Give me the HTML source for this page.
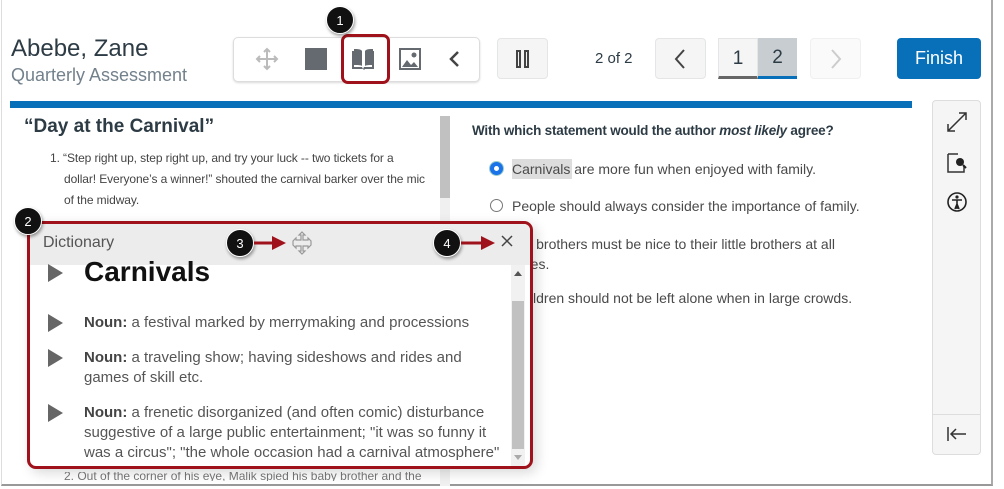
<!DOCTYPE html>
<html><head><meta charset="utf-8"><style>
*{margin:0;padding:0;box-sizing:border-box}
body{width:1004px;height:489px;background:#fff;font-family:"Liberation Sans",sans-serif;position:relative;overflow:hidden;color:#2d3b45}
.a{position:absolute}
.btn{position:absolute;border:1px solid #e3e5e7;border-radius:4px;background:#f5f5f5}
.badge{position:absolute;width:28px;height:28px;border-radius:50%;background:#111;color:#fff;font-size:13px;text-align:center;line-height:28px;box-shadow:1px 2px 3px rgba(0,0,0,.4);border:1px solid #fff}
.opt{position:absolute;left:512px;font-size:14px;color:#4a4a4a}
.radio{position:absolute;left:490px;width:13px;height:13px;border-radius:50%;border:1px solid #777;background:#fff}
.tri{position:absolute;left:48px;width:0;height:0;border-left:15px solid #666;border-top:9px solid transparent;border-bottom:9px solid transparent}
.def{position:absolute;left:84px;font-size:15px;line-height:20px;color:#555;width:420px}
.def b{color:#444}
</style></head><body>
<div class="a" style="left:1px;top:0;width:992px;height:486px;border-right:2px solid #aaa;border-bottom:2px solid #999;border-left:1px solid #ddd"></div>

<div class="a" style="left:11px;top:35px;font-size:24px;color:#2d3b45">Abebe, Zane</div>
<div class="a" style="left:11px;top:65px;font-size:18px;color:#73818c">Quarterly Assessment</div>

<div class="a" style="left:233px;top:37px;width:247px;height:45px;border:1px solid #ddd;border-radius:5px;background:#fff;box-shadow:0 1px 2px rgba(0,0,0,.15)"></div>
<svg class="a" style="left:255px;top:47px" width="24" height="24" viewBox="0 0 24 24" fill="none" stroke="#bbb" stroke-width="2"><path d="M12 2v20M2 12h20M9 5l3-3 3 3M9 19l3 3 3-3M5 9l-3 3 3 3M19 9l3 3-3 3"/></svg>
<div class="a" style="left:305px;top:48px;width:22px;height:22px;background:#656970"></div>
<svg class="a" style="left:351px;top:48px" width="25" height="22" viewBox="0 0 25 22"><path d="M1 3h2v16h8l1 2 1-2h8V3h2v18h-9l-1 1-1-1H1z" fill="#656970"/><path d="M3 1c3 0 7 0 8 2v15c-1-1-5-1-8-1zM22 1c-3 0-7 0-8 2v15c1-1 5-1 8-1z" fill="#656970"/></svg>
<svg class="a" style="left:399px;top:48px" width="22" height="22" viewBox="0 0 22 22"><rect x="1" y="1" width="20" height="20" fill="none" stroke="#656970" stroke-width="2"/><circle cx="15" cy="7" r="2.5" fill="#656970"/><path d="M3 19l5-7 4 5 3-3 4 5z" fill="#656970"/></svg>
<svg class="a" style="left:447px;top:50px" width="14" height="18" viewBox="0 0 14 18"><path d="M11 2L4 9l7 7" fill="none" stroke="#444" stroke-width="2.5"/></svg>
<div class="a" style="left:341px;top:34px;width:49px;height:50px;border:3px solid #a0121b;border-radius:7px"></div>
<div class="badge" style="left:326px;top:6px">1</div>

<div class="btn" style="left:497px;top:38px;width:51px;height:41px"></div>
<div class="a" style="left:516px;top:50px;width:5px;height:18px;border:2px solid #444"></div>
<div class="a" style="left:524px;top:50px;width:5px;height:18px;border:2px solid #444"></div>
<div class="a" style="left:595px;top:50px;font-size:15px;color:#2d3b45">2 of 2</div>
<div class="btn" style="left:655px;top:38px;width:51px;height:41px"></div>
<svg class="a" style="left:673px;top:48px" width="14" height="22" viewBox="0 0 14 22"><path d="M11 2L3 11l8 9" fill="none" stroke="#444" stroke-width="2"/></svg>
<div class="a" style="left:718px;top:38px;width:40px;height:41px;background:#f5f5f5;border:1px solid #e3e5e7;border-bottom:3px solid #666;text-align:center;font-size:19px;line-height:40px">1</div>
<div class="a" style="left:758px;top:38px;width:39px;height:41px;background:#c7cdd1;border-bottom:3px solid #0770b8;text-align:center;font-size:19px;line-height:40px">2</div>
<div class="btn" style="left:810px;top:38px;width:51px;height:41px;background:#fafafa;border-color:#f0f0f0"></div>
<svg class="a" style="left:829px;top:48px" width="14" height="22" viewBox="0 0 14 22"><path d="M3 2l8 9-8 9" fill="none" stroke="#ccc" stroke-width="2"/></svg>
<div class="a" style="left:897px;top:38px;width:84px;height:41px;background:#0770b8;border-radius:4px;color:#fff;font-size:18px;text-align:center;line-height:41px">Finish</div>

<div class="a" style="left:10px;top:101px;width:902px;height:7px;background:#0770b8"></div>

<div class="a" style="left:24px;top:116px;font-size:19px;font-weight:bold;color:#2d3b45">“Day at the Carnival”</div>
<div class="a" style="left:50px;top:148px;font-size:12px;line-height:21px;color:#444;white-space:nowrap;letter-spacing:-0.1px">1.&nbsp;“Step right up, step right up, and try your luck -- two tickets for a<br><span style="padding-left:14px">dollar! Everyone’s a winner!” shouted the carnival barker over the mic</span><br><span style="padding-left:14px">of the midway.</span></div>
<div class="a" style="left:440px;top:116px;width:10px;height:370px;background:#f0f0f0"></div>
<div class="a" style="left:440px;top:116px;width:10px;height:82px;background:#c1c1c1"></div>
<div class="a" style="left:64px;top:472px;width:380px;height:9px;overflow:hidden;font-size:12px;line-height:9px;color:#777;white-space:nowrap">2. Out of the corner of his eye, Malik spied his baby brother and the</div>

<div class="a" style="left:472px;top:123px;font-size:13.5px;font-weight:bold;color:#2d3b45;letter-spacing:-0.2px">With which statement would the author <i>most likely</i> agree?</div>
<div class="radio" style="top:162px;border:4px solid #1a73e8;box-shadow:0 0 0 1px #9cc"></div>
<div class="a" style="left:512px;top:159px;width:60px;height:20px;background:#ddd"></div>
<div class="opt" style="top:161px">Carnivals are more fun when enjoyed with family.</div>
<div class="radio" style="top:199px"></div>
<div class="opt" style="top:198px">People should always consider the importance of family.</div>
<div class="radio" style="top:235px"></div>
<div class="opt" style="top:234px;line-height:20px">Big brothers must be nice to their little brothers at all<br>times.</div>
<div class="radio" style="top:291px"></div>
<div class="opt" style="top:290px">Children should not be left alone when in large crowds.</div>

<div class="a" style="left:932px;top:100px;width:49px;height:355px;background:#f5f5f5;border:1px solid #ddd;border-radius:4px"></div>
<div class="a" style="left:932px;top:414px;width:49px;height:1px;background:#ddd"></div>
<svg class="a" style="left:946px;top:111px" width="22" height="22" viewBox="0 0 22 22" fill="none" stroke="#333" stroke-width="1.5"><path d="M2 20L20 2M13 2h7v7M2 13v7h7"/></svg>
<svg class="a" style="left:946px;top:152px" width="22" height="22" viewBox="0 0 22 22"><path d="M2 2h10M2 2v18h16v-6" fill="none" stroke="#333" stroke-width="1.5"/><circle cx="14" cy="10" r="4" fill="#222"/><path d="M17 13l3 3" stroke="#222" stroke-width="2"/></svg>
<svg class="a" style="left:946px;top:191px" width="22" height="22" viewBox="0 0 22 22"><circle cx="11" cy="11" r="9" fill="none" stroke="#222" stroke-width="1.6"/><circle cx="11" cy="6" r="1.6" fill="#222"/><path d="M6 9h10M11 9v9M9 18l2-5 2 5" stroke="#222" stroke-width="1.6" fill="none"/></svg>
<svg class="a" style="left:946px;top:425px" width="22" height="18" viewBox="0 0 22 18" fill="none" stroke="#333" stroke-width="1.5"><path d="M2 2v14M5 9h15M10 4L5 9l5 5"/></svg>

<div class="a" style="left:27px;top:221px;width:506px;height:248px;border:3px solid #a0121b;border-radius:9px;background:#fff;overflow:hidden;box-shadow:4px 4px 12px rgba(0,0,0,.15)">
 <div class="a" style="left:0;top:0;width:500px;height:41px;background:#ececec"></div>
 <div class="a" style="left:13px;top:10px;font-size:16px;color:#555">Dictionary</div>
 <div class="a" style="left:481px;top:41px;width:14px;height:204px;background:#f1f1f1"></div>
 <div class="a" style="left:482px;top:77px;width:12px;height:148px;background:#c1c1c1"></div>
 <div class="a" style="left:484px;top:47px;border-left:4px solid transparent;border-right:4px solid transparent;border-bottom:5px solid #555"></div>
 <div class="a" style="left:484px;top:231px;border-left:4px solid transparent;border-right:4px solid transparent;border-top:5px solid #aaa"></div>
</div>
<svg class="a" style="left:290px;top:231px" width="24" height="24" viewBox="0 0 24 24" fill="none" stroke="#999" stroke-width="1.2"><path d="M12 1l3 3h-2v5h5V7l3 3v0l0 4-3 3v-2h-5v5h2l-3 3-3-3h2v-5H6v2l-3-3v-4l3-3v2h5V4H9z"/></svg>
<div class="tri" style="top:264px"></div>
<div class="a" style="left:84px;top:256px;font-size:28px;font-weight:bold;color:#111">Carnivals</div>
<div class="tri" style="top:314px"></div>
<div class="def" style="top:313px"><b>Noun:</b> a festival marked by merrymaking and processions</div>
<div class="tri" style="top:349px"></div>
<div class="def" style="top:348px"><b>Noun:</b> a traveling show; having sideshows and rides and games of skill etc.</div>
<div class="tri" style="top:404px"></div>
<div class="def" style="top:403px"><b>Noun:</b> a frenetic disorganized (and often comic) disturbance suggestive of a large public entertainment; "it was so funny it was a circus"; "the whole occasion had a carnival atmosphere"</div>

<div class="badge" style="left:14px;top:207px">2</div>
<div class="badge" style="left:226px;top:229px">3</div>
<svg class="a" style="left:254px;top:236px" width="34" height="14"><path d="M0 7h20" stroke="#a0121b" stroke-width="3"/><path d="M18 0l14 7-14 7z" fill="#a0121b"/></svg>
<div class="badge" style="left:433px;top:229px">4</div>
<svg class="a" style="left:461px;top:236px" width="36" height="14"><path d="M0 7h22" stroke="#a0121b" stroke-width="3"/><path d="M20 0l14 7-14 7z" fill="#a0121b"/></svg>
<svg class="a" style="left:501px;top:235px" width="12" height="12" viewBox="0 0 12 12"><path d="M1 1l10 10M11 1L1 11" stroke="#444" stroke-width="1.5"/></svg>
</body></html>
